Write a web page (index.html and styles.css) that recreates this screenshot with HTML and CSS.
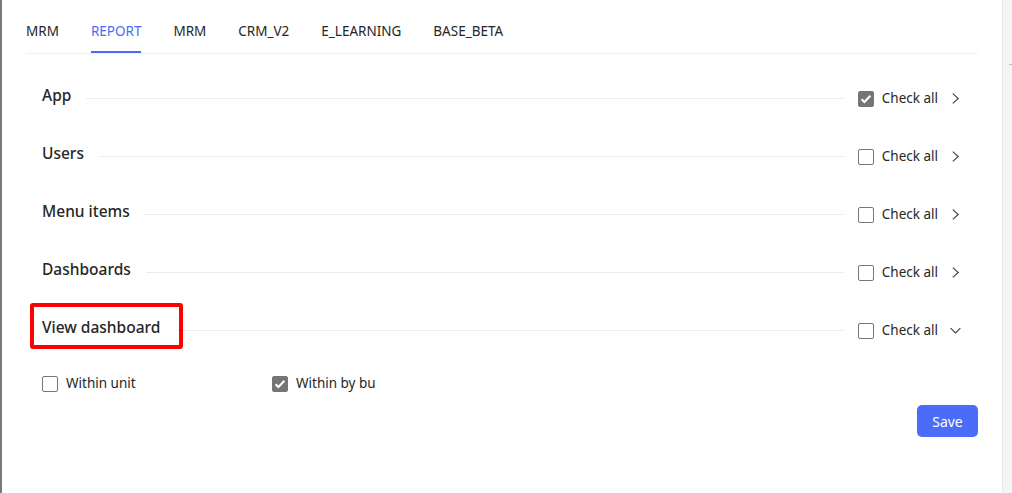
FILE: index.html
```html
<!DOCTYPE html>
<html>
<head>
<meta charset="utf-8">
<link rel="stylesheet" href="styles.css">
</head>
<body>
<div class="frame">
  <main class="page">
    <nav class="tabs">
      <span class="tab">MRM</span>
      <span class="tab active">REPORT</span>
      <span class="tab">MRM</span>
      <span class="tab">CRM_V2</span>
      <span class="tab">E_LEARNING</span>
      <span class="tab">BASE_BETA</span>
    </nav>
    <section class="groups">
      <div class="row">
        <span class="title">App</span>
        <span class="rule"></span>
        <label class="check"><span class="box checked"><svg viewBox="0 0 16 16"><path d="M3 8.2l3.2 3.2L13 4.4" /></svg></span>Check all</label>
        <svg class="chev" viewBox="0 0 12 12"><path d="M3.5 1.5l5 4.5-5 4.5"/></svg>
      </div>
      <div class="row">
        <span class="title">Users</span>
        <span class="rule"></span>
        <label class="check"><span class="box"></span>Check all</label>
        <svg class="chev" viewBox="0 0 12 12"><path d="M3.5 1.5l5 4.5-5 4.5"/></svg>
      </div>
      <div class="row">
        <span class="title">Menu items</span>
        <span class="rule"></span>
        <label class="check"><span class="box"></span>Check all</label>
        <svg class="chev" viewBox="0 0 12 12"><path d="M3.5 1.5l5 4.5-5 4.5"/></svg>
      </div>
      <div class="row">
        <span class="title">Dashboards</span>
        <span class="rule"></span>
        <label class="check"><span class="box"></span>Check all</label>
        <svg class="chev" viewBox="0 0 12 12"><path d="M3.5 1.5l5 4.5-5 4.5"/></svg>
      </div>
      <div class="row">
        <span class="title highlight">View dashboard<span class="mark"></span></span>
        <span class="rule"></span>
        <label class="check"><span class="box"></span>Check all</label>
        <svg class="chev" viewBox="0 0 12 12"><path d="M1.5 3.8l4.5 4.5 4.5-4.5"/></svg>
      </div>
      <div class="options">
        <label class="check opt"><span class="box"></span>Within unit</label>
        <label class="check opt"><span class="box checked"><svg viewBox="0 0 16 16"><path d="M3 8.2l3.2 3.2L13 4.4" /></svg></span>Within by bu</label>
      </div>
      <div class="actions">
        <button class="save">Save</button>
      </div>
    </section>
  </main>
  <aside class="side"><span class="dot"></span></aside>
</div>
</body>
</html>
```

FILE: styles.css
```css
* { box-sizing: border-box; }
html, body { margin: 0; padding: 0; background: #fff; }
body {
  font-family: "Segoe UI", "Noto Sans", "Open Sans", sans-serif;
  color: #262626;
  font-size: 14px;
}
.frame {
  display: flex;
  width: 1012px;
  height: 493px;
  border-left: 2px solid #7a7a7a;
}
.page {
  flex: 1;
  padding: 0 24px 0 24px;
}
.side {
  width: 10px;
  background: #f5f5f5;
  border-left: 1px solid #e6e6e6;
  position: relative;
}
.dot {
  position: absolute;
  left: 6px;
  top: 64px;
  width: 3px;
  height: 1px;
  background: #bbb;
}
.tabs {
  display: flex;
  gap: 32px;
  height: 54px;
  border-bottom: 1px solid #f0f0f0;
  padding-top: 20px;
}
.tab {
  font-size: 13.5px;
  color: #262626;
  line-height: 22px;
  height: 33px;
}
.tab.active {
  color: #4a6cf7;
  border-bottom: 2px solid #4a6cf7;
}
.groups {
  padding: 15px 16px 0 16px;
}
.row {
  display: flex;
  align-items: center;
  height: 58px;
}
.title {
  font-size: 15.5px;
  font-weight: 500;
  color: #262626;
  position: relative;
  margin-top: -6px;
}
.mark {
  position: absolute;
  left: -12px;
  top: -13px;
  width: 153px;
  height: 46px;
  border: 4px solid #ff0000;
  border-radius: 3px;
}
.rule {
  flex: 1;
  height: 1px;
  background: #ececec;
  margin: 0 14px 0 15px;
}
.check {
  display: flex;
  align-items: center;
  gap: 8px;
  font-size: 13.5px;
  color: #262626;
}
.box {
  width: 16px;
  height: 16px;
  border: 1px solid #767676;
  border-radius: 2px;
  background: #fff;
  display: inline-flex;
  margin-top: 1px;
}
.box.checked {
  background: #757575;
  border-color: #757575;
}
.box svg {
  width: 14px;
  height: 14px;
  fill: none;
  stroke: #fff;
  stroke-width: 2.4;
}
.chev {
  width: 13px;
  height: 13px;
  margin-left: 11px;
  margin-top: 1px;
  fill: none;
  stroke: #444;
  stroke-width: 1.1;
}
.options {
  display: flex;
  height: 46px;
  align-items: center;
  padding-top: 2px;
}
.opt { width: 230px; }
.actions {
  display: flex;
  justify-content: flex-end;
  margin-right: -16px;
}
.save {
  width: 61px;
  height: 32px;
  background: #4a6cf7;
  color: #fff;
  border: none;
  border-radius: 5px;
  font-family: inherit;
  font-size: 14px;
  padding: 0;
}
```
